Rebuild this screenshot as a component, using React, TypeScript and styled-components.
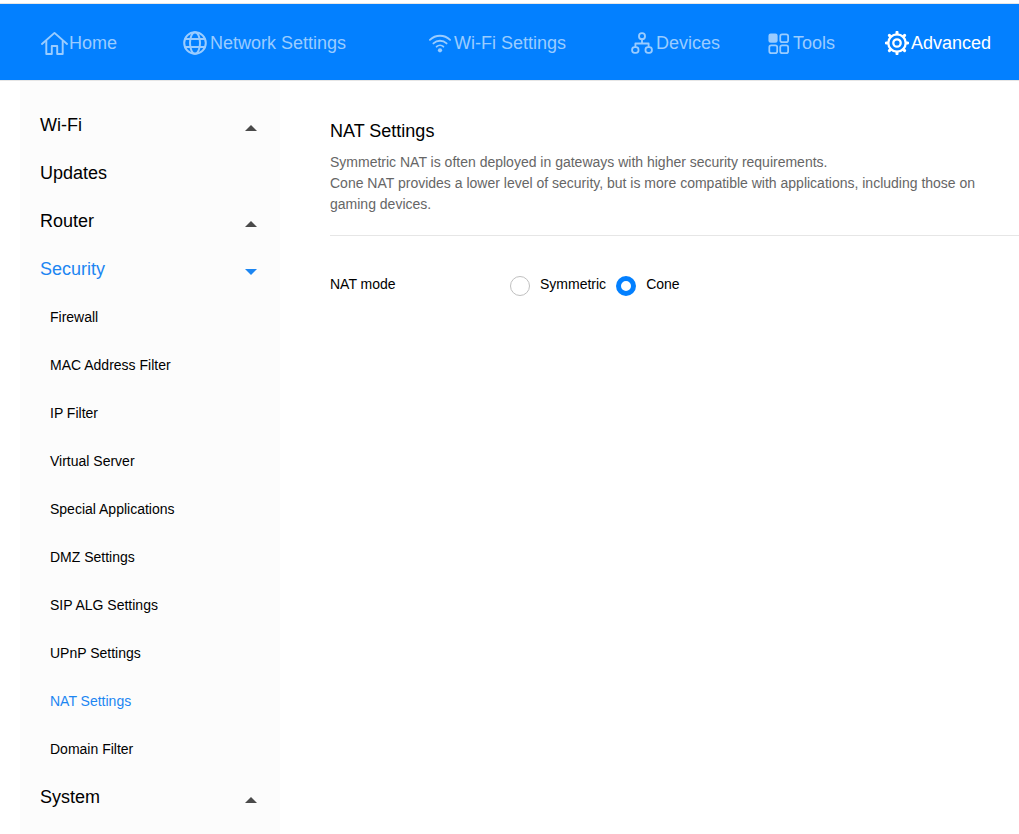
import styled, { createGlobalStyle } from "styled-components";
import type { ReactNode } from "react";

const HomeIcon = () => (
  <NavSvg viewBox="0 0 28 24">
    <path d="M1 12.500 14 1 27 12.500" />
    <path d="M5.500 9.500V22.800H11.200V14.500h5.600v8.300h5.700V9.500" />
  </NavSvg>
);

const GlobeIcon = () => (
  <NavSvg viewBox="0 0 24 24" strokeWidth="1.700">
    <circle cx="12" cy="12" r="10.800" strokeWidth="2" />
    <ellipse cx="12" cy="12" rx="5" ry="10.800" />
    <path d="M2.500 8h19M2.500 16h19" />
  </NavSvg>
);

const WifiIcon = () => (
  <NavSvg viewBox="0 0 24 24">
    <path d="M1 8.500c6.200-5.900 15.800-5.900 22 0" />
    <path d="M4.800 12.500c4.100-3.900 10.300-3.900 14.400 0" />
    <path d="M8.300 16c2.100-1.900 5.300-1.900 7.400 0" />
    <FilledCircle cx="12" cy="20" r="2.300" />
  </NavSvg>
);

const DevicesIcon = () => (
  <NavSvg viewBox="0 0 24 24">
    <circle cx="12" cy="4.500" r="3.300" />
    <path d="M12 7.800V12.500M4.800 16.500v-4h14.400v4" />
    <rect x="1.200" y="16.500" width="7" height="6.300" rx="2.800" />
    <rect x="15.800" y="16.500" width="7" height="6.300" rx="2.800" />
  </NavSvg>
);

const ToolsIcon = () => (
  <NavSvg viewBox="0 0 24 24">
    <FilledRect x="0.500" y="0.500" width="10.500" height="10.500" rx="2.500" />
    <rect x="14" y="1.500" width="9" height="9" rx="2.200" />
    <rect x="1.500" y="14" width="9" height="9" rx="2.200" />
    <rect x="14" y="14" width="9" height="9" rx="2.200" />
  </NavSvg>
);

const GearIcon = () => (
  <NavSvg viewBox="0 0 24 24">
    <circle cx="12" cy="12" r="8.700" strokeWidth="2.300" />
    <circle cx="12" cy="12" r="3.700" strokeWidth="2.300" />
    <path
      strokeWidth="3"
      d="M12 1.200v1.500M12 21.300v1.500M1.200 12h1.500M21.300 12h1.500M4.400 4.400l1 1M18.600 18.600l1 1M4.400 19.600l1-1M18.600 5.400l1-1"
    />
  </NavSvg>
);

type NavEntry = { label: string; icon: ReactNode; width: number; gap: number; size: number; active?: boolean };

const navEntries: NavEntry[] = [
  { label: "Home", icon: <HomeIcon />, width: 142, gap: 1, size: 27 },
  { label: "Network Settings", icon: <GlobeIcon />, width: 246, gap: 3, size: 24 },
  { label: "Wi-Fi Settings", icon: <WifiIcon />, width: 202, gap: 3, size: 22 },
  { label: "Devices", icon: <DevicesIcon />, width: 137, gap: 3, size: 22 },
  { label: "Tools", icon: <ToolsIcon />, width: 117, gap: 4, size: 21 },
  { label: "Advanced", icon: <GearIcon />, width: 120, gap: 2, size: 24, active: true },
];

type SideEntry = { label: string; sub?: boolean; caret?: "up" | "down"; active?: boolean };

const sideEntries: SideEntry[] = [
  { label: "Wi-Fi", caret: "up" },
  { label: "Updates" },
  { label: "Router", caret: "up" },
  { label: "Security", caret: "down", active: true },
  { label: "Firewall", sub: true },
  { label: "MAC Address Filter", sub: true },
  { label: "IP Filter", sub: true },
  { label: "Virtual Server", sub: true },
  { label: "Special Applications", sub: true },
  { label: "DMZ Settings", sub: true },
  { label: "SIP ALG Settings", sub: true },
  { label: "UPnP Settings", sub: true },
  { label: "NAT Settings", sub: true, active: true },
  { label: "Domain Filter", sub: true },
  { label: "System", caret: "up" },
];

export default function App() {
  return (
    <>
      <GlobalStyle />
      <Page>
        <TopBar>
          {navEntries.map(item => (
            <NavItem key={item.label} $width={item.width} $gap={item.gap} $size={item.size} $active={item.active}>
              {item.icon}
              {item.label}
            </NavItem>
          ))}
        </TopBar>
        <Body>
          <Sidebar>
            {sideEntries.map(item => (
              <SideRow key={item.label} $sub={item.sub} $active={item.active}>
                {item.label}
                {item.caret && <Caret $dir={item.caret} />}
              </SideRow>
            ))}
          </Sidebar>
          <Content>
            <Intro>
              <Title>NAT Settings</Title>
              <Description>
                Symmetric NAT is often deployed in gateways with higher security requirements.
                <br />
                Cone NAT provides a lower level of security, but is more compatible with applications, including those on
                gaming devices.
              </Description>
            </Intro>
            <FormRow>
              <FieldLabel>NAT mode</FieldLabel>
              <RadioOption>
                <Radio />
                <RadioText>Symmetric</RadioText>
              </RadioOption>
              <RadioOption>
                <Radio $checked />
                <RadioText>Cone</RadioText>
              </RadioOption>
            </FormRow>
          </Content>
        </Body>
      </Page>
    </>
  );
}

const GlobalStyle = createGlobalStyle`
  html, body {
    margin: 0;
    padding: 0;
    background: #fff;
    overflow: hidden;
  }
  * {
    box-sizing: border-box;
  }
  body {
    font-family: "Liberation Sans", Arial, sans-serif;
  }
`;

const Page = styled.div`
  width: 1019px;
  height: 834px;
  padding-top: 3px;
  display: flex;
  flex-direction: column;
  background: #fff;
`;

const TopBar = styled.header`
  height: 78px;
  flex-shrink: 0;
  display: flex;
  align-items: center;
  padding: 2px 0 0 41px;
  background: #0380ff;
  border-top: 1px solid #e6e6e6;
  border-bottom: 1px solid #e6e6e6;
`;

const NavItem = styled.div<{ $width: number; $gap: number; $size: number; $active?: boolean }>`
  width: ${p => p.$width}px;
  flex-shrink: 0;
  display: flex;
  align-items: center;
  gap: ${p => p.$gap}px;
  font-size: 18px;
  color: ${p => (p.$active ? "#ffffff" : "#9accff")};

  svg {
    width: ${p => p.$size}px;
    height: ${p => p.$size}px;
  }
`;

const NavSvg = styled.svg`
  flex-shrink: 0;
  fill: none;
  stroke: currentColor;
  stroke-width: 2;
  stroke-linecap: round;
  stroke-linejoin: round;
`;

const FilledCircle = styled.circle`
  fill: currentColor;
  stroke: none;
`;

const FilledRect = styled.rect`
  fill: currentColor;
  stroke: none;
`;

const Body = styled.div`
  flex: 1;
  display: flex;
  min-height: 0;
`;

const Sidebar = styled.nav`
  width: 260px;
  margin-left: 20px;
  padding-top: 20px;
  background: #fcfcfc;
  flex-shrink: 0;
`;

const SideRow = styled.div<{ $sub?: boolean; $active?: boolean }>`
  height: 48px;
  display: flex;
  align-items: center;
  justify-content: space-between;
  padding: 0 23px 0 ${p => (p.$sub ? 30 : 20)}px;
  font-size: ${p => (p.$sub ? 14 : 18)}px;
  color: ${p => (p.$active ? "#1c86f2" : "#000")};
`;

const Caret = styled.span<{ $dir: "up" | "down" }>`
  width: 0;
  height: 0;
  margin-top: 6px;
  border-left: 6px solid transparent;
  border-right: 6px solid transparent;
  ${p =>
    p.$dir === "up"
      ? "border-bottom: 6px solid #4a4a4a;"
      : "border-top: 6px solid #1c86f2;"}
`;

const Content = styled.main`
  flex: 1;
  min-width: 0;
  padding: 38px 0 0 50px;
`;

const Intro = styled.section`
  padding-bottom: 20px;
  border-bottom: 1px solid #e6e6e6;
`;

const Title = styled.h1`
  margin: 0 0 9px;
  font-size: 18px;
  font-weight: 400;
  line-height: 24px;
  color: #000;
`;

const Description = styled.p`
  margin: 0;
  max-width: 670px;
  font-size: 14px;
  line-height: 21px;
  color: #666;
`;

const FormRow = styled.div`
  display: flex;
  align-items: center;
  margin-top: 37px;
  height: 22px;
  font-size: 14px;
  color: #000;
`;

const FieldLabel = styled.span`
  width: 180px;
`;

const RadioOption = styled.label`
  display: flex;
  align-items: center;
  margin-right: 10px;
`;

const Radio = styled.span<{ $checked?: boolean }>`
  width: 20px;
  height: 20px;
  margin-top: 3px;
  border-radius: 50%;
  background: #fff;
  border: ${p => (p.$checked ? "5.5px solid #0380ff" : "1.5px solid #c0c0c0")};
`;

const RadioText = styled.span`
  margin-left: 10px;
`;
